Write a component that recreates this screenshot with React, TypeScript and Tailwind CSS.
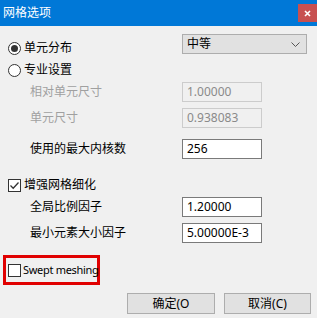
import React from "react";

const font = { fontFamily: '"Noto Sans", "Noto Sans CJK SC", sans-serif' };

function Radio({ checked }: { checked?: boolean }) {
  return (
    <span className="w-[13px] h-[13px] rounded-full border border-[#333333] bg-white flex items-center justify-center shrink-0">
      {checked && <span className="w-[7px] h-[7px] rounded-full bg-[#333333]" />}
    </span>
  );
}

function Check({ checked }: { checked?: boolean }) {
  return (
    <span className="w-[13px] h-[13px] border border-[#333333] bg-white flex items-center justify-center shrink-0">
      {checked && (
        <svg width="11" height="11" viewBox="0 0 11 11">
          <polyline points="1.5,5.5 4.2,8.2 9.5,2.5" fill="none" stroke="#333333" strokeWidth="1.3" />
        </svg>
      )}
    </span>
  );
}

function Field({ label, value, disabled, mt }: { label: string; value: string; disabled?: boolean; mt: string }) {
  return (
    <div className={`flex items-center h-[20px] ${mt}`}>
      <span className={`pl-[30px] w-[182px] text-[12px] leading-[14px] ${disabled ? "text-[#a0a0a0]" : "text-black"}`}>{label}</span>
      <div
        className={`w-[80px] h-[20px] flex items-center pl-[4px] text-[12px] leading-[14px] border ${
          disabled ? "bg-[#f0f0f0] border-[#cccccc] text-[#8a8a8a]" : "bg-white border-[#7a7a7a] text-black"
        }`}
      >
        {value}
      </div>
    </div>
  );
}

export default function App() {
  return (
    <div className="w-[317px] h-[318px] bg-[#f0f0f0] flex flex-col overflow-hidden" style={font}>
      <div className="h-[26px] bg-[#0078d7] flex items-start justify-between shrink-0">
        <span className="text-white text-[12px] leading-[14px] pl-[3px] mt-[6px]">网格选项</span>
        <div className="w-[19px] h-[18px] mt-[4px] bg-[#c75050] flex items-center justify-center">
          <svg width="7" height="7" viewBox="0 0 7 7">
            <path d="M1 1 L6 6 M6 1 L1 6" stroke="white" strokeWidth="1.6" />
          </svg>
        </div>
      </div>

      <div className="flex items-start h-[20px] mt-[8px]">
        <div className="flex items-center gap-[3px] pl-[8px] w-[182px] mt-[6px] h-[16px]">
          <Radio checked />
          <span className="text-[12px] leading-[14px] text-black">单元分布</span>
        </div>
        <div className="w-[125px] h-[20px] bg-[#e1e1e1] border border-[#adadad] flex items-center justify-between pl-[4px] pr-[6px]">
          <span className="text-[12px] leading-[14px] text-black">中等</span>
          <svg width="9" height="5" viewBox="0 0 9 5">
            <polyline points="0.5,0.5 4.5,4.5 8.5,0.5" fill="none" stroke="#555555" strokeWidth="1" />
          </svg>
        </div>
      </div>

      <div className="flex items-center gap-[3px] pl-[8px] h-[16px] mt-[8px]">
        <Radio />
        <span className="text-[12px] leading-[14px] text-black">专业设置</span>
      </div>

      <Field label="相对单元尺寸" value="1.00000" disabled mt="mt-[4px]" />
      <Field label="单元尺寸" value="0.938083" disabled mt="mt-[6px]" />
      <Field label="使用的最大内核数" value="256" mt="mt-[11px]" />

      <div className="flex items-center gap-[3px] pl-[8px] h-[16px] mt-[18px]">
        <Check checked />
        <span className="text-[12px] leading-[14px] text-black">增强网格细化</span>
      </div>

      <Field label="全局比例因子" value="1.20000" mt="mt-[4px]" />
      <Field label="最小元素大小因子" value="5.00000E-3" mt="mt-[6px]" />

      <div className="ml-[3px] mt-[12px] w-[97px] h-[30px] border-[3px] border-[#e00000] flex items-center gap-[2px] pl-[2px]">
        <Check />
        <span className="text-[11px] leading-[14px] tracking-[-0.3px] text-black whitespace-nowrap">Swept meshing</span>
      </div>

      <div className="flex gap-[9px] pl-[127px] mt-[8px]">
        <div className="w-[88px] h-[21px] bg-[#e1e1e1] border border-[#adadad] flex items-center justify-center text-[12px] leading-[14px] text-black">
          确定(O
        </div>
        <div className="w-[87px] h-[21px] bg-[#e1e1e1] border border-[#adadad] flex items-center justify-center text-[12px] leading-[14px] text-black">
          取消(C)
        </div>
      </div>
    </div>
  );
}
